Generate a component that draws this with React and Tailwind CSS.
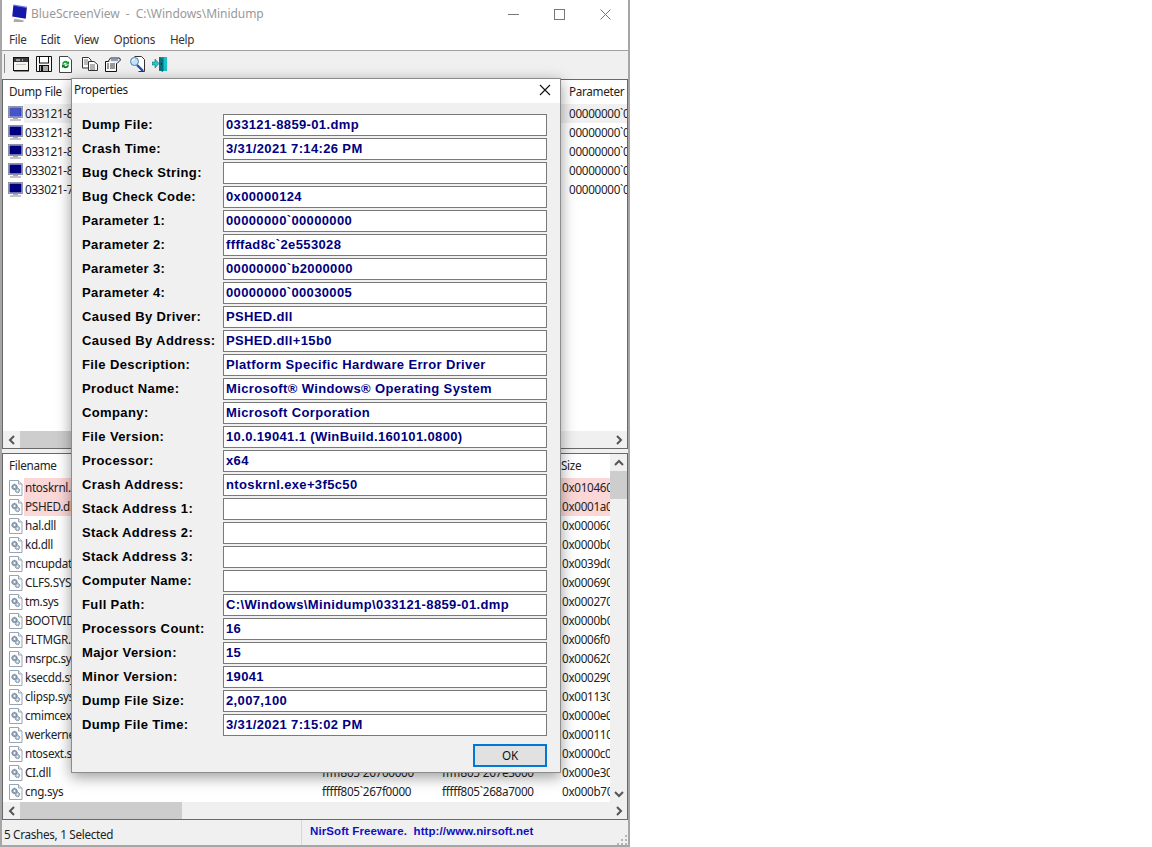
import React from "react";

const FONT = "font-['Noto_Sans',sans-serif] text-[11.7px] tracking-[-0.3px]";
const LABEL = "font-['Liberation_Sans',sans-serif] font-bold text-[13px] tracking-[0.38px]";
const VALUE = "font-['Liberation_Sans',sans-serif] font-bold text-[13px] tracking-[0.36px]";

const fields = [
  ["Dump File:", "033121-8859-01.dmp"],
  ["Crash Time:", "3/31/2021 7:14:26 PM"],
  ["Bug Check String:", ""],
  ["Bug Check Code:", "0x00000124"],
  ["Parameter 1:", "00000000`00000000"],
  ["Parameter 2:", "ffffad8c`2e553028"],
  ["Parameter 3:", "00000000`b2000000"],
  ["Parameter 4:", "00000000`00030005"],
  ["Caused By Driver:", "PSHED.dll"],
  ["Caused By Address:", "PSHED.dll+15b0"],
  ["File Description:", "Platform Specific Hardware Error Driver"],
  ["Product Name:", "Microsoft® Windows® Operating System"],
  ["Company:", "Microsoft Corporation"],
  ["File Version:", "10.0.19041.1 (WinBuild.160101.0800)"],
  ["Processor:", "x64"],
  ["Crash Address:", "ntoskrnl.exe+3f5c50"],
  ["Stack Address 1:", ""],
  ["Stack Address 2:", ""],
  ["Stack Address 3:", ""],
  ["Computer Name:", ""],
  ["Full Path:", "C:\\Windows\\Minidump\\033121-8859-01.dmp"],
  ["Processors Count:", "16"],
  ["Major Version:", "15"],
  ["Minor Version:", "19041"],
  ["Dump File Size:", "2,007,100"],
  ["Dump File Time:", "3/31/2021 7:15:02 PM"],
];

const dumps = ["033121-8859-01.dmp", "033121-8828-01.dmp", "033121-8812-01.dmp", "033021-8843-01.dmp", "033021-7968-01.dmp"];

const drivers = [
  ["ntoskrnl.exe", "", "", "0x010460", true],
  ["PSHED.dll", "", "", "0x0001a0", true],
  ["hal.dll", "", "", "0x000060"],
  ["kd.dll", "", "", "0x0000b0"],
  ["mcupdate.dll", "", "", "0x0039d0"],
  ["CLFS.SYS", "", "", "0x000690"],
  ["tm.sys", "", "", "0x000270"],
  ["BOOTVID.dll", "", "", "0x0000b0"],
  ["FLTMGR.SYS", "", "", "0x0006f0"],
  ["msrpc.sys", "", "", "0x000620"],
  ["ksecdd.sys", "", "", "0x000290"],
  ["clipsp.sys", "", "", "0x001130"],
  ["cmimcext.sys", "", "", "0x0000e0"],
  ["werkernel.sys", "", "", "0x000110"],
  ["ntosext.sys", "", "", "0x0000c0"],
  ["CI.dll", "fffff805`26700000", "fffff805`267e3000", "0x000e30"],
  ["cng.sys", "fffff805`267f0000", "fffff805`268a7000", "0x000b70"],
];

function Monitor({ active, className = "" }) {
  return (
    <svg width="15" height="16" viewBox="0 0 15 16" className={className}>
      <rect x="0.500" y="0.500" width="14" height="11" fill="#dfe3ee" stroke="#8d93a8" />
      <rect x="1.500" y="1.500" width="12" height="9" fill={active ? "#1c2cb4" : "#00007f"} />
      {active && <path d="M1.500 3h12M1.500 5h12M1.500 7h12M1.500 9h12M3 1.500v9M5 1.500v9M7 1.500v9M9 1.500v9M11 1.500v9" stroke="#7d8ad8" strokeWidth="0.500" />}
      <rect x="5" y="12" width="5" height="1" fill="#a9a9a9" />
      <rect x="2" y="13" width="11" height="2" fill="#c4c4c4" />
    </svg>
  );
}

function FileGear() {
  return (
    <svg width="14" height="16" viewBox="0 0 14 16" className="shrink-0">
      <path d="M0.500 0.500h9l3.500 3.500v11.500h-12.500z" fill="#fff" stroke="#9aa5b4" />
      <path d="M9.500 0.500v3.500h3.500" fill="#e6ebf2" stroke="#9aa5b4" />
      <circle cx="5.500" cy="7" r="2.700" fill="#8ea3bb" stroke="#5f7288" strokeDasharray="1 0.700" />
      <circle cx="5.500" cy="7" r="1" fill="#fff" />
      <circle cx="8.500" cy="10.500" r="2.200" fill="#b5c2d2" stroke="#6b7d92" strokeDasharray="1 0.600" />
      <circle cx="8.500" cy="10.500" r="0.700" fill="#fff" />
    </svg>
  );
}

function ToolIcons() {
  return (
    <>
      <svg width="16" height="15" viewBox="0 0 16 15" className="ml-[11px]">
        <rect x="0.500" y="0.500" width="15" height="13" fill="#f4f4ee" stroke="#111" />
        <rect x="1" y="1" width="14" height="4" fill="#3d3d3d" />
        <path d="M3 3h4M9 3h1" stroke="#fff" />
        <path d="M3 7.500h10" stroke="#c4c4c4" />
        <path d="M1 14.500h15" stroke="#888" />
      </svg>
      <svg width="16" height="16" viewBox="0 0 16 16" className="ml-[7px]">
        <path d="M0.500 0.500h15v15h-15z" fill="#f4f4f4" stroke="#111" />
        <rect x="3.500" y="0.500" width="9" height="6.500" fill="#fff" stroke="#111" />
        <rect x="3.500" y="9.500" width="9" height="6" fill="#aaa" stroke="#111" />
        <rect x="5" y="10" width="2" height="5" fill="#111" />
      </svg>
      <svg width="13" height="17" viewBox="0 0 13 17" className="ml-[7px]">
        <path d="M0.500 0.500h8.500l3.500 3.500v12.500h-12z" fill="#fff" stroke="#444" />
        <path d="M3 7.500a3.500 3.500 0 0 1 6-1.500l1-1v3.500H6.500l1.200-1.200A2 2 0 0 0 4.500 8z" fill="#14a332" />
        <path d="M10 9.500a3.500 3.500 0 0 1-6 1.500l-1 1V8.500h3.500l-1.200 1.200a2 2 0 0 0 3.200-.7z" fill="#0b7a22" />
      </svg>
      <svg width="16" height="14" viewBox="0 0 16 14" className="ml-[10px]">
        <path d="M0.500 0.500h6l2.500 2.500v8h-8.500z" fill="#fff" stroke="#333" />
        <path d="M2 3h4M2 5h4M2 7h4" stroke="#777" />
        <path d="M6.500 4.500h5.500l3.500 3v6h-9z" fill="#fff" stroke="#333" />
        <path d="M8 8h5M8 10h5M8 12h5" stroke="#666" />
      </svg>
      <svg width="16" height="15" viewBox="0 0 16 15" className="ml-[7px]">
        <path d="M0.500 4.500h11v10h-11z" fill="#fff" stroke="#111" />
        <path d="M2 7h2M5 7h5M2 9h2M5 9h5M2 11h2M5 11h5" stroke="#333" />
        <path d="M3 4.500l2.500-3.500h9l1 2-3.500 3.500" fill="#e6ecf4" stroke="#223" />
        <path d="M6 3h7" stroke="#447" />
      </svg>
      <svg width="15" height="16" viewBox="0 0 15 16" className="ml-[9px]">
        <path d="M4.500 0.500h7l3 3v12h-6" fill="#fff" stroke="#333" />
        <path d="M7 9l6 6" stroke="#1d4fb0" strokeWidth="2.400" />
        <circle cx="4.500" cy="5.500" r="4" fill="#bfe3f5" stroke="#4d7ea8" />
        <path d="M2.500 5a2 2 0 0 1 2-2" stroke="#fff" fill="none" />
      </svg>
      <svg width="15" height="16" viewBox="0 0 15 16" className="ml-[7px]">
        <path d="M7 1h8v14H7z" fill="#0d9aa6" />
        <path d="M7 1l4 2v13l-4-2z" fill="#0b6f7d" />
        <path d="M12 1h3v14h-3z" fill="#17c2c8" />
        <path d="M0 6h3V3l4 4.500L3 12V9H0z" fill="#18c9d0" stroke="#0a5a66" strokeWidth="0.500" />
        <rect x="9" y="7" width="1" height="2" fill="#033" />
      </svg>
    </>
  );
}

function ScrollH({ thumbWidth }) {
  return (
    <div className="h-[17px] bg-[#f0f0f0] flex items-center shrink-0">
      <div className="w-[17px] h-full flex items-center justify-center">
        <svg width="8" height="10" viewBox="0 0 8 10"><path d="M6 1L2 5l4 4" fill="none" stroke="#555" strokeWidth="2" /></svg>
      </div>
      <div className="flex-1 h-full">
        <div className="h-full bg-[#cdcdcd]" style={{ width: thumbWidth }} />
      </div>
      <div className="w-[17px] h-full flex items-center justify-center">
        <svg width="8" height="10" viewBox="0 0 8 10"><path d="M2 1l4 4-4 4" fill="none" stroke="#555" strokeWidth="2" /></svg>
      </div>
    </div>
  );
}

function Field({ label, value }) {
  return (
    <div className="h-[24px] flex items-center">
      <div className={`w-[151px] pl-[10px] text-black whitespace-nowrap ${LABEL}`}>{label}</div>
      <div className={`w-[324px] h-[22px] bg-white border border-[#7a7a7a] pl-[2px] flex items-center text-[#000080] whitespace-nowrap overflow-hidden ${VALUE}`}>{value}</div>
    </div>
  );
}

function Dialog() {
  return (
    <div className="absolute left-[69px] top-[78px] w-[490px] h-[695px] bg-[#f0f0f0] border border-[#8c8c8c] shadow-[0_4px_14px_rgba(0,0,0,0.4)] flex flex-col">
      <div className="h-[24px] bg-white flex items-center justify-between shrink-0 pb-[2px]">
        <span className={`pl-[2px] text-[#1a1a1a] ${FONT}`}>Properties</span>
        <svg width="12" height="12" viewBox="0 0 12 12" className="mr-[9px]"><path d="M1 1l10 10M11 1L1 11" stroke="#111" strokeWidth="1.100" /></svg>
      </div>
      <div className="pt-[10px] flex flex-col">
        {fields.map(([l, v]) => <Field key={l} label={l} value={v} />)}
      </div>
      <div className="flex justify-end pr-[13px] pt-[7px]">
        <div className={`w-[74px] h-[23px] bg-[#e1e1e1] border-2 border-[#0078d7] flex items-center justify-center text-[#111] ${FONT}`}>OK</div>
      </div>
    </div>
  );
}

export default function App() {
  return (
    <div className={`relative w-[630px] h-[847px] bg-white border-x-2 border-b-2 border-[#a6a6a6] flex flex-col overflow-hidden ${FONT}`}>
      <div className="h-[28px] shrink-0 flex items-center">
        <svg width="18" height="18" viewBox="0 0 16 16" className="ml-[8px] mt-[-2px]">
          <path d="M3 1l12 2-1 10-12-2z" fill="#1518a8" />
          <path d="M3 1l12 2" stroke="#6a74d8" />
          <path d="M4 13l8 1.500v1.500H3z" fill="#aaa" />
        </svg>
        <span className="ml-[3px] text-[#999] whitespace-pre text-[12px] tracking-[-0.05px]">BlueScreenView  -  C:\Windows\Minidump</span>
        <div className="ml-auto flex items-center">
          <svg width="11" height="11" viewBox="0 0 11 11" className="mr-[35px]"><path d="M0 5.500h11" stroke="#777" /></svg>
          <svg width="11" height="11" viewBox="0 0 11 11" className="mr-[35px]"><rect x="0.500" y="0.500" width="10" height="10" fill="none" stroke="#777" /></svg>
          <svg width="11" height="11" viewBox="0 0 11 11" className="mr-[17px]"><path d="M0.500 0.500l10 10M10.500 0.500l-10 10" stroke="#777" /></svg>
        </div>
      </div>
      <div className="h-[23px] shrink-0 flex items-center border-b border-[#a0a0a0] pt-[1px] text-[#333]">
        <span className="ml-[7px]">File</span>
        <span className="ml-[14px]">Edit</span>
        <span className="ml-[14px]">View</span>
        <span className="ml-[15px]">Options</span>
        <span className="ml-[15px]">Help</span>
      </div>
      <div className="h-[28px] shrink-0 bg-[#f0f0f0] flex items-center relative pb-[2px]">
        <div className="absolute left-[2px] top-[3px] w-[1px] h-[19px] bg-[#8a8a8a]" />
        <ToolIcons />
      </div>
      <div className="h-[370px] shrink-0 border border-[#696969] bg-white flex flex-col">
        <div className="h-[24px] shrink-0 flex items-center text-[#222]">
          <span className="ml-[6px] w-[560px]">Dump File</span>
          <span className="whitespace-nowrap">Parameter</span>
        </div>
        <div className="flex-1 overflow-hidden">
          {dumps.map((d, i) => (
            <div key={d} className="h-[19px] flex items-center whitespace-nowrap overflow-hidden text-[#222]">
              <Monitor active={i === 0} className="ml-[5px] mr-[1px] shrink-0" />
              <div className={`flex-1 h-full flex items-center ${i === 0 ? "bg-[#f0f0f0]" : ""}`}>
                <span className="ml-[1px] w-[544px] shrink-0">{d}</span>
                <span>00000000`00000000</span>
              </div>
            </div>
          ))}
        </div>
        <ScrollH thumbWidth="500px" />
      </div>
      <div className="h-[4px] shrink-0 bg-[#f0f0f0]" />
      <div className="flex-1 min-h-0 border border-[#696969] bg-white flex flex-col">
        <div className="flex-1 min-h-0 flex">
          <div className="flex-1 min-w-0 overflow-hidden">
            <div className="h-[24px] flex items-center text-[#222]">
              <span className="ml-[6px] w-[552px]">Filename</span>
              <span>Size</span>
            </div>
            {drivers.map(([n, a, b, s, hot]) => (
              <div key={n} className="h-[19px] flex items-center whitespace-nowrap overflow-hidden text-[#222]">
                <div className="ml-[6px] mr-[1px] shrink-0 flex items-center"><FileGear /></div>
                <div className={`flex-1 h-full flex items-center pl-[1px] ${hot ? "bg-[#fcd7d7]" : ""}`}>
                  <span className="w-[297px] shrink-0">{n}</span>
                  <span className="w-[120px] shrink-0">{a}</span>
                  <span className="w-[120px] shrink-0">{b}</span>
                  <span>{s}</span>
                </div>
              </div>
            ))}
          </div>
          <div className="w-[17px] shrink-0 bg-[#f0f0f0] flex flex-col">
            <div className="h-[17px] flex items-center justify-center">
              <svg width="10" height="8" viewBox="0 0 10 8"><path d="M1 6l4-4 4 4" fill="none" stroke="#555" strokeWidth="2" /></svg>
            </div>
            <div className="h-[28px] bg-[#cdcdcd]" />
            <div className="flex-1" />
            <div className="h-[17px] flex items-center justify-center">
              <svg width="10" height="8" viewBox="0 0 10 8"><path d="M1 2l4 4 4-4" fill="none" stroke="#555" strokeWidth="2" /></svg>
            </div>
          </div>
        </div>
        <ScrollH thumbWidth="162px" />
      </div>
      <div className="h-[25px] shrink-0 bg-[#f0f0f0] flex items-center relative">
        <span className="ml-[2px] w-[297px] text-[#222] pt-[4px]">5 Crashes, 1 Selected</span>
        <div className="w-[1px] h-full bg-[#d8d8d8]" />
        <span className="ml-[8px] mb-[1px] text-[#1010c0] font-['Liberation_Sans',sans-serif] font-bold text-[11.500px] tracking-[0.1px] whitespace-pre">NirSoft Freeware.  http://www.nirsoft.net</span>
        <svg width="12" height="12" viewBox="0 0 12 12" className="absolute right-0 bottom-0">
          <path d="M9 2h2v2H9zM5 6h2v2H5zM9 6h2v2H9zM1 10h2v2H1zM5 10h2v2H5zM9 10h2v2H9z" fill="#b5b5b5" />
        </svg>
      </div>
      <Dialog />
    </div>
  );
}
